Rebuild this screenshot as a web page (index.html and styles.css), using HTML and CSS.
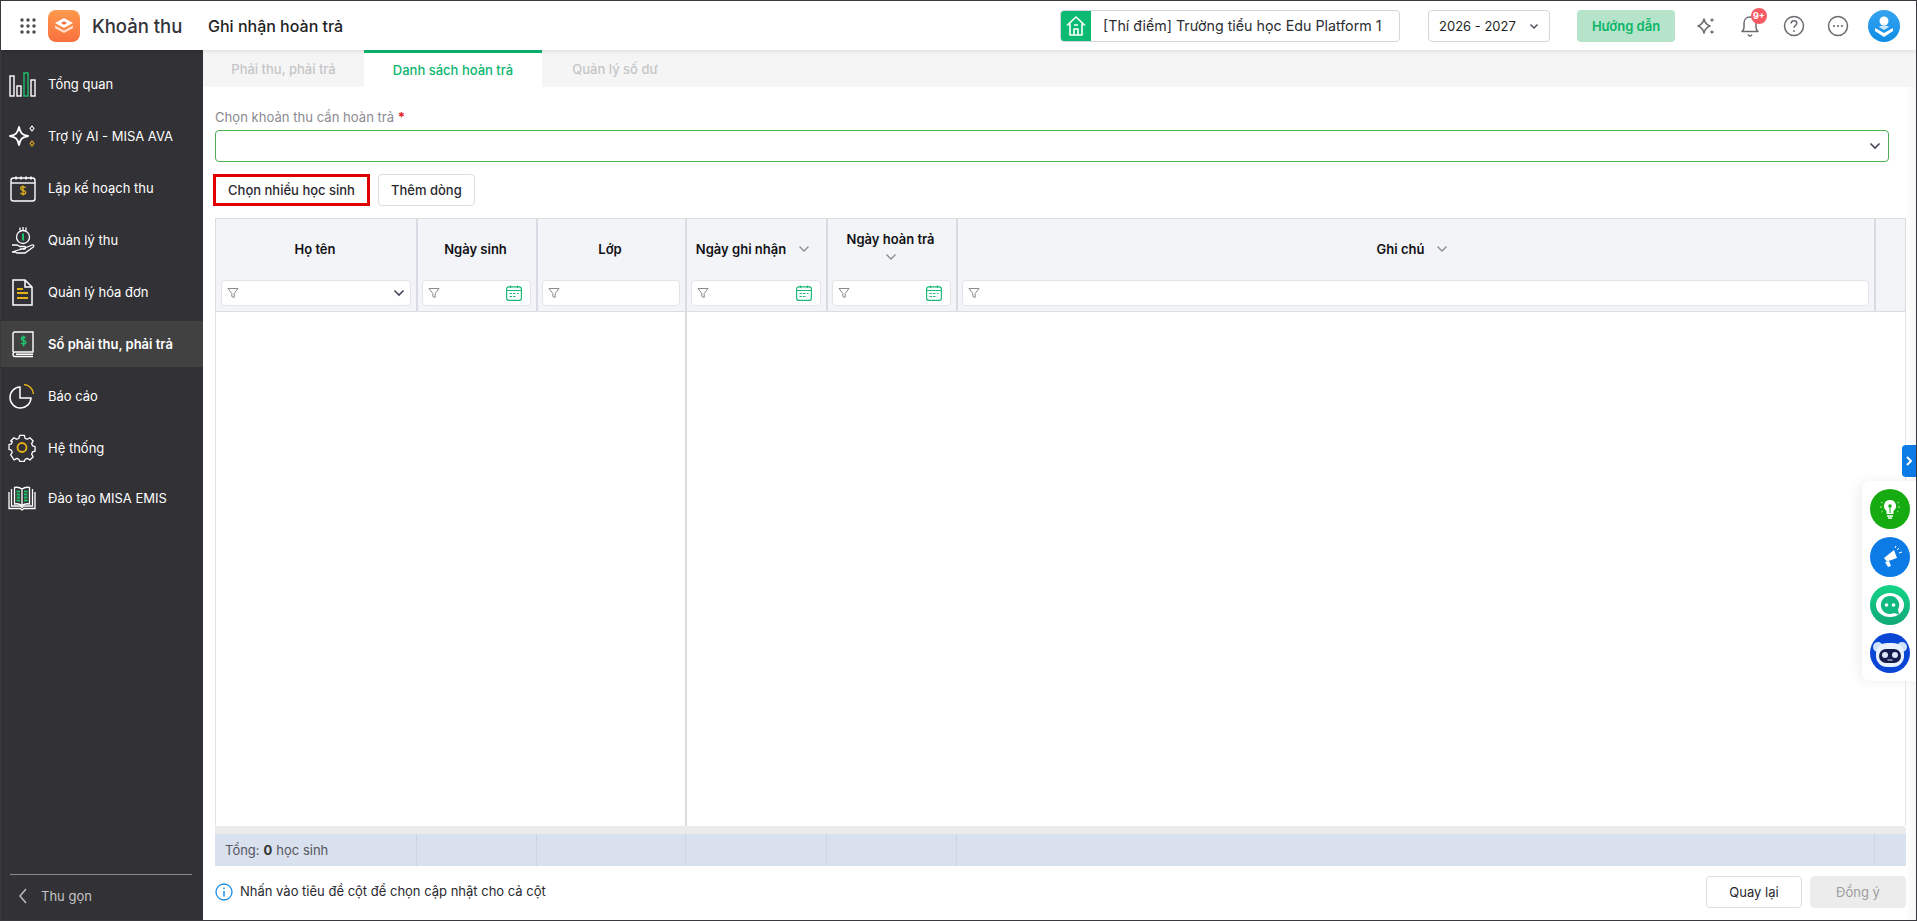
FILE: index.html
```html
<!DOCTYPE html>
<html lang="vi">
<head>
<meta charset="utf-8">
<title>Ghi nhận hoàn trả</title>
<link rel="stylesheet" href="styles.css">
</head>
<body>
<div class="app">
  <header class="topbar">
    <svg class="waffle" viewBox="0 0 16 16"><g fill="#4a4a50"><circle cx="2" cy="2" r="1.7"/><circle cx="8" cy="2" r="1.7"/><circle cx="14" cy="2" r="1.7"/><circle cx="2" cy="8" r="1.7"/><circle cx="8" cy="8" r="1.7"/><circle cx="14" cy="8" r="1.7"/><circle cx="2" cy="14" r="1.7"/><circle cx="8" cy="14" r="1.7"/><circle cx="14" cy="14" r="1.7"/></g></svg>
    <svg class="logo" viewBox="0 0 32 32"><defs><linearGradient id="lg" x1="0" y1="0" x2="0" y2="1"><stop offset="0" stop-color="#ff9a4d"/><stop offset="1" stop-color="#f9703e"/></linearGradient></defs><rect width="32" height="32" rx="8" fill="url(#lg)"/><path d="M16 8l9 5-9 5-9-5z" fill="#fff"/><path d="M7 15.500l9 5 9-5v2.500l-9 5-9-5z" fill="#ffe0cc"/><path d="M13 13l3-1.700 3 1.700-3 1.700z" fill="#f9703e"/></svg>
    <span class="app-name">Khoản thu</span>
    <span class="page-name">Ghi nhận hoàn trả</span>
    <div class="school">
      <span class="school-icon"><svg viewBox="0 0 24 24" fill="none" stroke="#fff" stroke-width="1.6" stroke-linejoin="round"><path d="M3 11.500L12 3l9 8.500M6 9.500V21h12V9.500"/><path d="M10 21v-6h4v6M10 11h4"/></svg></span>
      <span class="school-name">[Thí điểm] Trường tiểu học Edu Platform 1</span>
    </div>
    <div class="year"><span>2026 - 2027</span><svg class="chev" viewBox="0 0 12 12"><path d="M2.500 4.500L6 8l3.500-3.500" fill="none" stroke="#4a4a5a" stroke-width="1.400"/></svg></div>
    <button class="guide">Hướng dẫn</button>
    <div class="tools">
      <svg class="tool" viewBox="0 0 24 24" fill="#6b6b70"><path d="M10 5c.8 4 2 5.500 6 7-4 1.500-5.200 3-6 7-.8-4-2-5.500-6-7 4-1.500 5.200-3 6-7z" fill="none" stroke="#6b6b70" stroke-width="1.500" stroke-linejoin="round"/><path d="M18 3.500c.3 1.500.8 2 2.300 2.500-1.500.5-2 1-2.300 2.500-.3-1.500-.8-2-2.300-2.500 1.500-.5 2-1 2.300-2.500zM18 15.500c.3 1.500.8 2 2.300 2.500-1.500.5-2 1-2.300 2.500-.3-1.500-.8-2-2.300-2.500 1.500-.5 2-1 2.300-2.500z"/></svg>
      <span class="bell">
        <svg class="tool" viewBox="0 0 24 24" fill="none" stroke="#6b6b70" stroke-width="1.500" stroke-linejoin="round"><path d="M12 3c-3.500 0-6 2.500-6 6v4.500c0 1.500-1 3-2 4h16c-1-1-2-2.500-2-4V9c0-3.500-2.500-6-6-6z"/><path d="M10 20.500c.5 1 1.200 1.500 2 1.500s1.500-.5 2-1.500"/></svg>
        <span class="badge">9+</span>
      </span>
      <svg class="tool" viewBox="0 0 24 24" fill="none" stroke="#6b6b70" stroke-width="1.500"><circle cx="12" cy="12" r="9.500"/><path d="M9.200 9.500c0-1.700 1.300-2.700 2.800-2.700s2.800 1 2.800 2.500c0 2.300-2.800 2.300-2.800 4.400"/><circle cx="12" cy="17" r=".9" fill="#6b6b70" stroke="none"/></svg>
      <svg class="tool" viewBox="0 0 24 24" fill="none" stroke="#6b6b70" stroke-width="1.500"><circle cx="12" cy="12" r="9.500"/><g fill="#6b6b70" stroke="none"><circle cx="8" cy="12" r="1.100"/><circle cx="12" cy="12" r="1.100"/><circle cx="16" cy="12" r="1.100"/></g></svg>
      <svg class="avatar" viewBox="0 0 32 32"><defs><linearGradient id="av" x1="0" y1="0" x2="0" y2="1"><stop offset="0" stop-color="#35a4f0"/><stop offset="1" stop-color="#0f8de6"/></linearGradient></defs><circle cx="16" cy="16" r="16" fill="url(#av)"/><circle cx="16" cy="11" r="4.500" fill="#fff"/><path d="M7 18l9 5 9-5v3l-9 6-9-6z" fill="#fff"/><path d="M11 17c2-2 8-2 10 0l-5 3z" fill="#cfe9fb"/></svg>
    </div>
  </header>

  <div class="below">
    <nav class="sidebar">
      <a class="nav-item">
        <svg class="nav-icon" viewBox="0 0 28 28" fill="none" stroke="#fff" stroke-width="1.400"><rect x="2" y="6" width="4" height="20"/><rect x="9" y="16" width="4" height="10"/><rect x="16" y="3" width="4" height="23" stroke="#1fc16b"/><rect x="23" y="10" width="4" height="16"/></svg>
        <span>Tổng quan</span>
      </a>
      <a class="nav-item">
        <svg class="nav-icon" viewBox="0 0 28 28" fill="none" stroke="#fff" stroke-width="1.800" stroke-linejoin="round"><path d="M11 5c1.300 6 3 7.700 9 9-6 1.300-7.700 3-9 9-1.300-6-3-7.700-9-9 6-1.300 7.700-3 9-9z"/><path d="M24 4l2 2.500-2 2.500-2-2.500z" stroke-width="1.200"/><path d="M24 19l2 2.500-2 2.500-2-2.500z" stroke="#e5b217" stroke-width="1.200"/></svg>
        <span>Trợ lý AI - MISA AVA</span>
      </a>
      <a class="nav-item">
        <svg class="nav-icon" viewBox="0 0 28 28" fill="none" stroke="#fff" stroke-width="1.400"><rect x="3" y="4" width="24" height="23" rx="2.500"/><path d="M3 9h24"/><path d="M8 2.500v3M13 2.500v3M18 2.500v3M23 2.500v3" stroke-width="1.600"/><path d="M17.500 14c-.5-1-1.300-1.300-2.500-1.300-1.400 0-2.300.7-2.300 1.800 0 2.500 5 1.300 5 3.800 0 1.200-1 1.900-2.700 1.900-1.200 0-2.100-.5-2.500-1.400M15 11.500v10" stroke="#e5b217" stroke-width="1.300"/></svg>
        <span>Lập kế hoạch thu</span>
      </a>
      <a class="nav-item">
        <svg class="nav-icon" viewBox="0 0 28 28" fill="none" stroke="#fff" stroke-width="1.300"><path d="M12 1.500v3M15 1v3.500M18 1.500v3"/><circle cx="15" cy="11" r="6.500"/><path d="M15 7.500v7" stroke="#1fc16b" stroke-width="2"/><path d="M4 19h5l3 1.500h4.500c1.500 0 1.500 2.500 0 2.500H12M17 22l7-3c1.500-.5 2.500 1 1.300 2L17 27H9l-2-1H4z"/></svg>
        <span>Quản lý thu</span>
      </a>
      <a class="nav-item">
        <svg class="nav-icon" viewBox="0 0 28 28" fill="none" stroke="#fff" stroke-width="1.500"><path d="M5 2h12l7 7v18H5z"/><path d="M17 2v7h7"/><path d="M9 11h6M9 15h11M9 20h11" stroke="#e5b217" stroke-width="1.800"/></svg>
        <span>Quản lý hóa đơn</span>
      </a>
      <a class="nav-item active">
        <svg class="nav-icon" viewBox="0 0 28 28" fill="none" stroke="#fff" stroke-width="1.400"><path d="M5 22V4c0-1 .8-2 2-2h18v20H7c-1.200 0-2 1-2 2.300S5.800 26.500 7 26.500h18M8 24.300h17"/><path d="M17.500 8c-.5-.8-1.200-1-2-1-1.300 0-2.200.6-2.200 1.700 0 2.300 4.600 1.200 4.600 3.600 0 1.100-1 1.700-2.400 1.700-1 0-1.900-.4-2.300-1.300M15.500 5.500v11" stroke="#1fc16b" stroke-width="1.500"/></svg>
        <span>Sổ phải thu, phải trả</span>
      </a>
      <a class="nav-item">
        <svg class="nav-icon" viewBox="0 0 28 28" fill="none" stroke="#fff" stroke-width="1.500"><path d="M12 5a10.500 10.500 0 1 0 11 11H12z"/><path d="M16 2.500A10.500 10.500 0 0 1 25.500 12" stroke="#e5b217"/></svg>
        <span>Báo cáo</span>
      </a>
      <a class="nav-item">
        <svg class="nav-icon" viewBox="0 0 28 28" fill="none" stroke="#fff" stroke-width="1.400" stroke-linejoin="round"><path d="M11.500 2h5l.8 3.200 2.400 1 2.800-1.700 3.500 3.500-1.700 2.800 1 2.400 2.700.8v5l-2.700.8-1 2.400 1.700 2.800-3.500 3.500-2.800-1.700-2.400 1-.8 2.200h-5l-.8-2.200-2.400-1-2.800 1.700L1.800 23l1.700-2.800-1-2.400L0 17v-5l2.500-.8 1-2.400L1.800 8 5.300 4.500l2.800 1.700 2.400-1z" transform="translate(1 -.5) scale(.93)"/><circle cx="14" cy="13.500" r="4.500" stroke="#e5b217" stroke-width="1.800"/></svg>
        <span>Hệ thống</span>
      </a>
      <a class="nav-item">
        <svg class="nav-icon" viewBox="0 0 28 28" fill="none" stroke="#fff" stroke-width="1.300"><path d="M3.500 5v17h9l1.500 1.500 1.500-1.500h9V5"/><path d="M1 8v16.500h11l2 1.500 2-1.500h11V8"/><path d="M14 5c-2-1.500-5-2-7.500-1.500V20c2.500-.5 5.500 0 7.500 1.500 2-1.500 5-2 7.500-1.500V3.500C19 3 16 3.500 14 5zM14 5v16"/><path d="M8.500 7.500h3.500M8.500 10.500h3.500M8.500 13.500h3.500M8.500 16.500h3.500M16 7.500h3.500M16 10.500h3.500M16 13.500h3.500M16 16.500h3.500" stroke="#1fc16b" stroke-width="2"/></svg>
        <span>Đào tạo MISA EMIS</span>
      </a>
      <div class="collapse">
        <svg class="collapse-icon" viewBox="0 0 12 18"><path d="M9 2L3 9l6 7" fill="none" stroke="#bdbdbd" stroke-width="1.500"/></svg>
        <span>Thu gọn</span>
      </div>
    </nav>

    <main class="main">
      <div class="tabs">
        <span class="tab">Phải thu, phải trả</span>
        <span class="tab current">Danh sách hoàn trả</span>
        <span class="tab third">Quản lý số dư</span>
      </div>
      <div class="content">
        <label class="field-label">Chọn khoản thu cần hoàn trả <b class="req">*</b></label>
        <div class="combo"><svg class="chev-dark" viewBox="0 0 12 12"><path d="M1.500 3.500L6 8l4.500-4.500" fill="none" stroke="#45455a" stroke-width="1.600"/></svg></div>
        <div class="actions">
          <button class="btn outlined">Chọn nhiều học sinh</button>
          <button class="btn">Thêm dòng</button>
        </div>

        <div class="grid">
          <div class="g-head">
            <div class="hc">
              <div class="ht"><span>Họ tên</span></div>
              <div class="fi"><svg class="funnel" viewBox="0 0 12 12"><path d="M1 1.500h10L7.200 6.500V10.500L4.800 9.500v-3z" fill="none" stroke="#8a8a8f"/></svg><svg class="chev-dark end" viewBox="0 0 12 12"><path d="M1.500 3.500L6 8l4.500-4.500" fill="none" stroke="#45455a" stroke-width="1.600"/></svg></div>
            </div>
            <div class="hc">
              <div class="ht"><span>Ngày sinh</span></div>
              <div class="fi"><svg class="funnel" viewBox="0 0 12 12"><path d="M1 1.500h10L7.200 6.500V10.500L4.800 9.500v-3z" fill="none" stroke="#8a8a8f"/></svg><svg class="cal end" viewBox="0 0 16 16" fill="none" stroke="#1fb978" stroke-width="1.200"><rect x=".6" y="1.800" width="14.800" height="13.600" rx="2.200"/><path d="M.6 5.500h14.800M4.500 .5v2.500M11.500 .5v2.500M3.500 8.500h2.500M7 8.500h2.500M11 8.500h1.500M3.500 11.500h2.500M7 11.500h2.500" /></svg></div>
            </div>
            <div class="hc">
              <div class="ht"><span>Lớp</span></div>
              <div class="fi"><svg class="funnel" viewBox="0 0 12 12"><path d="M1 1.500h10L7.200 6.500V10.500L4.800 9.500v-3z" fill="none" stroke="#8a8a8f"/></svg></div>
            </div>
            <div class="hc">
              <div class="ht sortable"><span>Ngày ghi nhận</span><svg class="chev-gray" viewBox="0 0 12 12"><path d="M1.500 3.500L6 8l4.500-4.500" fill="none" stroke="#8a8a90" stroke-width="1.300"/></svg></div>
              <div class="fi"><svg class="funnel" viewBox="0 0 12 12"><path d="M1 1.500h10L7.200 6.500V10.500L4.800 9.500v-3z" fill="none" stroke="#8a8a8f"/></svg><svg class="cal end" viewBox="0 0 16 16" fill="none" stroke="#1fb978" stroke-width="1.200"><rect x=".6" y="1.800" width="14.800" height="13.600" rx="2.200"/><path d="M.6 5.500h14.800M4.500 .5v2.500M11.500 .5v2.500M3.500 8.500h2.500M7 8.500h2.500M11 8.500h1.500M3.500 11.500h2.500M7 11.500h2.500" /></svg></div>
            </div>
            <div class="hc">
              <div class="ht wrap"><span>Ngày hoàn trả</span><svg class="chev-gray" viewBox="0 0 12 12"><path d="M1.500 3.500L6 8l4.500-4.500" fill="none" stroke="#8a8a90" stroke-width="1.300"/></svg></div>
              <div class="fi"><svg class="funnel" viewBox="0 0 12 12"><path d="M1 1.500h10L7.200 6.500V10.500L4.800 9.500v-3z" fill="none" stroke="#8a8a8f"/></svg><svg class="cal end" viewBox="0 0 16 16" fill="none" stroke="#1fb978" stroke-width="1.200"><rect x=".6" y="1.800" width="14.800" height="13.600" rx="2.200"/><path d="M.6 5.500h14.800M4.500 .5v2.500M11.500 .5v2.500M3.500 8.500h2.500M7 8.500h2.500M11 8.500h1.500M3.500 11.500h2.500M7 11.500h2.500" /></svg></div>
            </div>
            <div class="hc">
              <div class="ht sortable"><span>Ghi chú</span><svg class="chev-gray" viewBox="0 0 12 12"><path d="M1.500 3.500L6 8l4.500-4.500" fill="none" stroke="#8a8a90" stroke-width="1.300"/></svg></div>
              <div class="fi"><svg class="funnel" viewBox="0 0 12 12"><path d="M1 1.500h10L7.200 6.500V10.500L4.800 9.500v-3z" fill="none" stroke="#8a8a8f"/></svg></div>
            </div>
            <div class="hc last"></div>
          </div>
          <div class="g-body"><div class="pinned"></div><div class="rest"></div></div>
          <div class="g-scroll"></div>
          <div class="g-foot">
            <div class="fc total">Tổng: <b>0</b> học sinh</div>
            <div class="fc"></div><div class="fc"></div><div class="fc"></div><div class="fc"></div><div class="fc"></div><div class="fc last"></div>
          </div>
        </div>

        <div class="bottom">
          <div class="hint">
            <svg class="info" viewBox="0 0 18 18" fill="none" stroke="#1b90e8" stroke-width="1.300"><circle cx="9" cy="9" r="8"/><path d="M9 8v5.500" stroke-width="1.500"/><circle cx="9" cy="5.300" r=".9" fill="#1b90e8" stroke="none"/></svg>
            <span>Nhấn vào tiêu đề cột để chọn cập nhật cho cả cột</span>
          </div>
          <div class="bottom-btns">
            <button class="btn foot-btn">Quay lại</button>
            <button class="btn foot-btn disabled">Đồng ý</button>
          </div>
        </div>
      </div>
    </main>
  </div>

  <div class="drawer-tab"><svg viewBox="0 0 10 12"><path d="M3 2l4 4-4 4" fill="none" stroke="#fff" stroke-width="2"/></svg></div>
  <aside class="float-panel">
    <svg class="fab" viewBox="0 0 40 40"><circle cx="20" cy="20" r="20" fill="#16ab10"/><path d="M20 11a6 6 0 0 0-3.500 10.900V25h7v-3.100A6 6 0 0 0 20 11z" fill="#fff"/><path d="M17 27h6M18 29h4" stroke="#fff" stroke-width="1.300"/><circle cx="20" cy="17" r="1.800" fill="#16ab10"/><path d="M20 18v6" stroke="#16ab10"/><path d="M11 13l1.500 1M29 13l-1.500 1M10 18h1.800M28.200 18H30M11.500 23l1.200-.8M28.500 23l-1.200-.8" stroke="#cfeecd" stroke-width="1"/></svg>
    <svg class="fab" viewBox="0 0 40 40"><circle cx="20" cy="20" r="20" fill="#0c7be6"/><path d="M14 21l10-8 3 8-10 3.500z" fill="#fff"/><path d="M15 25l4-1 2 5-3 1z" fill="#fff"/><path d="M27 13l2-2M29 16l3-1M25 11l1-2" stroke="#fff" stroke-width="1"/></svg>
    <svg class="fab" viewBox="0 0 40 40"><defs><linearGradient id="gb" x1="0" y1="0" x2="0" y2="1"><stop offset="0" stop-color="#14d487"/><stop offset="1" stop-color="#10a878"/></linearGradient></defs><circle cx="20" cy="20" r="20" fill="url(#gb)"/><ellipse cx="20" cy="20" rx="14" ry="12" fill="#fff"/><path d="M20 11a9 9 0 1 0 4 17l5 1.500-1-5A9 9 0 0 0 20 11z" fill="#10b981"/><circle cx="16.500" cy="20" r="1.800" fill="#fff"/><circle cx="23.500" cy="20" r="1.800" fill="#fff"/></svg>
    <svg class="fab" viewBox="0 0 40 40"><circle cx="20" cy="20" r="20" fill="#0a46d6"/><circle cx="8" cy="14" r="5" fill="#cfe2fb"/><circle cx="32" cy="14" r="5" fill="#cfe2fb"/><rect x="6" y="10" width="28" height="24" rx="11" fill="#e9f1fd"/><rect x="9" y="16" width="22" height="14" rx="7" fill="#151c4c"/><circle cx="15" cy="22" r="3" fill="#dbe6fb"/><circle cx="25" cy="22" r="3" fill="#dbe6fb"/><path d="M17.500 27h5" stroke="#dbe6fb"/></svg>
  </aside>
</div>
</body>
</html>
```

FILE: styles.css
```css
* { box-sizing: border-box; }
html, body { margin: 0; height: 100%; overflow: hidden; }
body { font-family: Inter, "Noto Sans", "Liberation Sans", sans-serif; font-size: 13px; color: #1f1f24; background: #fff; }
button { font-family: inherit; }

.app { position: relative; height: 921px; border: 1px solid #3a3a3e; display: flex; flex-direction: column; overflow: hidden; }

.topbar { flex: 0 0 49px; display: flex; align-items: center; background: #fff; padding-left: 19px; position: relative; z-index: 2; box-shadow: 0 1px 4px rgba(0,0,0,.12); }
.waffle { width: 16px; height: 16px; }
.logo { width: 32px; height: 32px; margin-left: 12px; }
.app-name { font-size: 18.500px; font-weight: 500; color: #33333a; margin-left: 12px; width: 116px; }
.page-name { font-size: 16px; font-weight: 500; color: #1f1f24; }
.school { display: flex; align-items: center; margin-left: auto; width: 340px; height: 32px; border: 1px solid #d6d6da; border-radius: 4px; overflow: hidden; }
.school-icon { flex: 0 0 31px; height: 100%; background: #0cbb73; display: flex; align-items: center; justify-content: center; margin: -1px 0 -1px -1px; }
.school-icon svg { width: 24px; height: 24px; }
.school-name { font-size: 14.250px; color: #2c2c32; margin-left: 12px; white-space: nowrap; }
.year { width: 122px; height: 32px; margin-left: 28px; border: 1px solid #d6d6da; border-radius: 4px; display: flex; align-items: center; padding: 0 9px 0 10px; font-size: 13px; color: #1f1f24; justify-content: space-between; }
.chev { width: 12px; height: 12px; }
.guide { width: 98px; height: 32px; margin-left: 27px; border: 0; border-radius: 4px; background: #b6e4ca; color: #0bb568; font-size: 13px; font-weight: 600; }
.tools { display: flex; align-items: center; gap: 20px; margin-left: 19px; padding-right: 16px; }
.tool { width: 24px; height: 24px; display: block; }
.bell { position: relative; display: block; }
.badge { position: absolute; left: 13px; top: -6px; width: 16px; height: 16px; border-radius: 50%; background: #f65b63; color: #fff; font-size: 9px; font-weight: 700; line-height: 16px; text-align: center; }
.avatar { width: 32px; height: 32px; margin-left: -2px; }

.below { flex: 1; display: flex; min-height: 0; }

.sidebar { flex: 0 0 202px; background: #323135; display: flex; flex-direction: column; padding-top: 8px; color: #fff; }
.nav-item { flex: 0 0 52px; display: flex; align-items: center; padding-left: 7px; font-size: 13px; color: #fff; }
.nav-item:last-of-type { flex-basis: 47px; }
.nav-item.active { background: #414141; font-weight: 600; flex-basis: 46px; margin: 3px 0; }
.nav-icon { flex: 0 0 28px; height: 28px; margin-right: 12px; }
.collapse { margin: auto 11px 0 9px; height: 46px; border-top: 1px solid #8a8a8e; display: flex; align-items: center; gap: 12px; padding: 0 0 3px 7px; color: #c4c4c4; }
.collapse-icon { width: 12px; height: 18px; }

.main { flex: 1; display: flex; flex-direction: column; min-width: 0; }
.tabs { flex: 0 0 37px; display: flex; background: #f5f5f5; }
.tab { width: 161px; display: flex; align-items: center; justify-content: center; font-size: 13px; font-weight: 500; color: #c6c6c8; }
.tab.current { width: 178px; background: #fff; border-top: 3px solid #0cb56f; color: #0cb56f; }
.tab.third { width: 146px; }

.content { flex: 1; display: flex; flex-direction: column; min-height: 0; padding: 21px 10px 12px 12px; background: linear-gradient(to right, #fff calc(100% - 10px), #f6f6f6); }
.field-label { height: 22px; line-height: 18px; color: #8b8b90; font-size: 13.100px; }
.req { color: #e8202a; font-weight: 700; }
.combo { flex: 0 0 32px; width: 1674px; border: 1px solid #4caf50; border-radius: 4px; display: flex; align-items: center; justify-content: flex-end; padding-right: 7px; }
.chev-dark { width: 12px; height: 12px; display: block; }
.actions { display: flex; gap: 8px; margin: 12px 0; }
.btn { height: 32px; padding: 0 12px; background: #fff; border: 1px solid #dedede; border-radius: 4px; font-size: 13px; font-weight: 500; color: #2a2a30; }
.btn.outlined { outline: 0; width: 157px; border: 3px solid #e10000; border-radius: 0; margin-left: -2px; padding: 0; }

.grid { flex: 1; display: flex; flex-direction: column; min-height: 0; width: 1691px; --cols: 202px 120px 149px 141px 130px 918px 31px; }
.g-head { flex: 0 0 94px; display: grid; grid-template-columns: var(--cols); background: #f3f4f8; border: 1px solid #dcdde3; }
.hc { display: flex; flex-direction: column; border-right: 2px solid #d9dae4; padding: 0 5px 0 4px; min-width: 0; }
.hc:first-child { margin-left: -1px; padding-left: 6px; }
.hc.last { border-right: 0; }
.ht { flex: 1; display: flex; align-items: center; justify-content: center; gap: 8px; font-size: 13px; font-weight: 600; color: #111116; padding: 0 2px 2px 0; }
.ht.sortable { gap: 12px; padding-right: 6px; }
.ht.wrap { flex-direction: column; gap: 4px; padding-bottom: 6px; }
.fi { flex: 0 0 26px; margin-bottom: 5px; background: #fff; border: 1px solid #e4e4e8; border-radius: 4px; display: flex; align-items: center; padding: 0 5px; }
.funnel { width: 12px; height: 12px; display: block; }
.end { margin-left: auto; }
.cal { width: 16px; height: 16px; display: block; margin-right: 3px; }
.chev-gray { width: 12px; height: 12px; flex: none; display: block; }

.g-body { flex: 1; display: flex; min-height: 0; border-left: 1px solid #e4e4e8; border-right: 1px solid #e4e4e8; }
.pinned { width: 471px; border-right: 2px solid #dcdcdf; }
.rest { flex: 1; }
.g-scroll { flex: 0 0 8px; background: #ebebeb; border-radius: 0 4px 0 0; }
.g-foot { flex: 0 0 32px; display: grid; grid-template-columns: var(--cols); background: #d9e0ee; }
.fc { border-right: 1px solid #cdd4e3; }
.fc.last { border-right: 0; }
.total { display: flex; align-items: center; gap: 4px; padding-left: 10px; color: #55555c; font-size: 13px; }
.total b { color: #333; }

.bottom { flex: 0 0 32px; margin-top: 10px; width: 1691px; display: flex; align-items: center; justify-content: space-between; }
.hint { display: flex; align-items: center; gap: 7px; font-size: 13px; color: #2a2a30; }
.hint span { position: relative; top: -1px; }
.info { width: 18px; height: 18px; }
.bottom-btns { display: flex; gap: 8px; }
.foot-btn { width: 96px; padding: 0; font-weight: 400; }
.foot-btn.disabled { background: #ececec; border-color: #ececec; color: #9c9c9f; }

.drawer-tab { position: absolute; right: 0; top: 444px; width: 14px; height: 32px; background: #0c7be6; border-radius: 4px 0 0 4px; display: flex; align-items: center; justify-content: center; z-index: 3; }
.drawer-tab svg { width: 10px; height: 12px; }
.float-panel { position: absolute; right: 0; top: 480px; width: 54px; height: 200px; background: #fff; border-radius: 8px 0 0 8px; box-shadow: -4px 0 12px rgba(0,0,0,.06); display: flex; flex-direction: column; align-items: flex-start; gap: 8px; padding: 8px 0 0 8px; z-index: 3; }
.fab { width: 40px; height: 40px; display: block; }
```
